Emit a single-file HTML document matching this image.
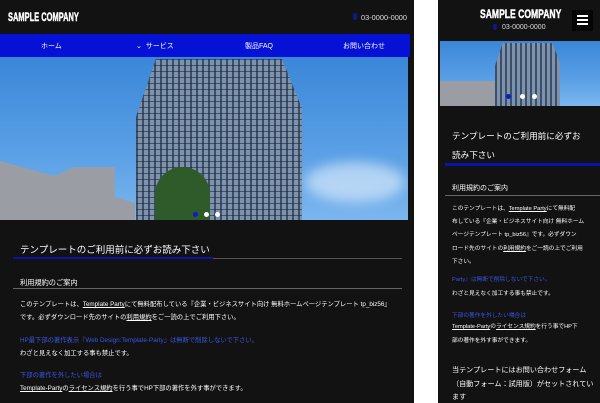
<!DOCTYPE html>
<html><head><meta charset="utf-8"><style>
*{margin:0;padding:0;box-sizing:border-box}
body{width:600px;height:403px;background:#fff;position:relative;overflow:hidden;font-family:"Liberation Sans","Noto Sans CJK JP",sans-serif;color:#fff}
.p{position:absolute;background:#121212;overflow:hidden}
.a{position:absolute;white-space:nowrap}
.u{text-decoration:underline}
.bl{color:#3b55e6}
.sky{background:linear-gradient(180deg,#3a86d8 0%,#5aa0e6 60%,#7bb6ee 100%)}
.logo{font-weight:bold;transform-origin:left top;-webkit-text-stroke:0.4px #fff}
</style></head><body>
<div class="p" style="left:0;top:0;width:414px;height:403px">
 <div class="a logo" style="left:8px;top:11px;font-size:11px;transform:scale(0.68,1.1)">SAMPLE COMPANY</div>
 <div class="a" style="left:353px;top:13px;width:4px;height:7px;background:#0b1a8a;border-radius:2px"></div>
 <div class="a" style="left:361px;top:13px;font-size:7.4px;color:#ddd">03-0000-0000</div>
 <div class="a" style="left:0;top:34px;width:410px;height:23px;background:#0511d4"></div>
 <div class="a" style="left:41px;top:41px;font-size:7px">ホーム</div>
 <div class="a" style="left:136px;top:41px;font-size:7px">⌄&nbsp; サービス</div>
 <div class="a" style="left:245px;top:41px;font-size:7px">製品FAQ</div>
 <div class="a" style="left:343px;top:41px;font-size:7px">お問い合わせ</div>
 <div class="a sky" style="left:0;top:57px;width:408px;height:163px;overflow:hidden">
  <div class="a" style="left:136px;top:2px;width:166px;height:165px;background:repeating-linear-gradient(90deg,#3d4f66 0 2px,#7d93ad 2px 6px),#5a6e88;clip-path:polygon(12% 0,88% 0,100% 30%,100% 100%,0 100%,0 35%)"></div>
  <div class="a" style="left:136px;top:2px;width:166px;height:165px;background:repeating-linear-gradient(180deg,rgba(30,40,55,.6) 0 1px,transparent 1px 6px);clip-path:polygon(12% 0,88% 0,100% 30%,100% 100%,0 100%,0 35%)"></div>
  <div class="a" style="left:0;top:104px;width:135px;height:60px;background:#9a9ea4;clip-path:polygon(0 0,40% 25%,55% 10%,85% 10%,85% 60%,100% 70%,100% 100%,0 100%)"></div>
  <div class="a" style="left:155px;top:110px;width:55px;height:55px;background:#2f5a2a;border-radius:50% 50% 0 0"></div>
  <div class="a" style="left:305px;top:105px;width:100px;height:40px;background:rgba(255,255,255,.5);border-radius:50%;filter:blur(6px)"></div>
  <div class="a" style="left:193px;top:155px;width:5px;height:5px;border-radius:50%;background:#0b1ad0"></div>
  <div class="a" style="left:204px;top:155px;width:5px;height:5px;border-radius:50%;background:#fff"></div>
  <div class="a" style="left:215px;top:155px;width:5px;height:5px;border-radius:50%;background:#fff"></div>
 </div>
 <div class="a" style="left:20px;top:242px;font-size:9.5px">テンプレートのご利用前に必ずお読み下さい</div>
 <div class="a" style="left:13px;top:258px;width:389px;height:1px;background:#555"></div>
 <div class="a" style="left:13px;top:257px;width:200px;height:2px;background:#0b14a8"></div>
 <div class="a" style="left:20px;top:278px;font-size:7.2px">利用規約のご案内</div>
 <div class="a" style="left:13px;top:288px;width:389px;height:1px;background:#666"></div>
 <div class="a" style="left:20px;top:299px;font-size:6.3px">このテンプレートは、<span class="u">Template Party</span>にて無料配布している『企業・ビジネスサイト向け 無料ホームページテンプレート tp_biz56』</div>
 <div class="a" style="left:20px;top:312px;font-size:6.3px">です。必ずダウンロード先のサイトの<span class="u">利用規約</span>をご一読の上でご利用下さい。</div>
 <div class="a bl" style="left:20px;top:335px;font-size:6.3px">HP最下部の著作表示『Web Design:Template-Party』は無断で削除しないで下さい。</div>
 <div class="a" style="left:20px;top:348px;font-size:6.3px">わざと見えなく加工する事も禁止です。</div>
 <div class="a bl" style="left:20px;top:370px;font-size:6.3px">下部の著作を外したい場合は</div>
 <div class="a" style="left:20px;top:383px;font-size:6.3px"><span class="u">Template-Party</span>の<span class="u">ライセンス規約</span>を行う事でHP下部の著作を外す事ができます。</div>
</div>
<div class="p" style="left:438px;top:0;width:162px;height:403px">
 <div class="a logo" style="left:42px;top:8px;font-size:11px;transform:scale(0.78,1.1)">SAMPLE COMPANY</div>
 <div class="a" style="left:55px;top:24px;width:4px;height:6px;background:#0b1a8a;border-radius:2px"></div>
 <div class="a" style="left:64px;top:24px;font-size:7px;color:#ddd">03-0000-0000</div>
 <div class="a" style="left:134px;top:10px;width:21px;height:21px;background:#050505"></div>
 <div class="a" style="left:139px;top:15px;width:11px;height:1.5px;background:#fff;box-shadow:0 4px 0 #fff,0 8px 0 #fff"></div>
 <div class="a sky" style="left:2px;top:41px;width:160px;height:65px;overflow:hidden">
  <div class="a" style="left:55px;top:2px;width:65px;height:65px;background:repeating-linear-gradient(90deg,#3d4f66 0 2px,#7d93ad 2px 5px),#5a6e88;clip-path:polygon(12% 0,88% 0,100% 30%,100% 100%,0 100%,0 35%)"></div>
  <div class="a" style="left:0;top:40px;width:55px;height:25px;background:#9a9ea4"></div>
  <div class="a" style="left:66px;top:53px;width:5px;height:5px;border-radius:50%;background:#0b1ad0"></div>
  <div class="a" style="left:80px;top:53px;width:5px;height:5px;border-radius:50%;background:#fff"></div>
  <div class="a" style="left:92px;top:53px;width:5px;height:5px;border-radius:50%;background:#fff"></div>
 </div>
 <div class="a" style="left:14px;top:127px;font-size:8.6px;line-height:19px">テンプレートのご利用前に必ずお<br>読み下さい</div>
 <div class="a" style="left:7px;top:163px;width:155px;height:3px;background:#0b14a8"></div>
 <div class="a" style="left:14px;top:183px;font-size:7px">利用規約のご案内</div>
 <div class="a" style="left:7px;top:195px;width:155px;height:1px;background:#666"></div>
 <div class="a" style="left:14px;top:203px;font-size:5.7px;line-height:13.2px">このテンプレートは、<span class="u">Template Party</span>にて無料配<br>布している『企業・ビジネスサイト向け 無料ホーム<br>ページテンプレート tp_biz56』です。必ずダウン<br>ロード先のサイトの<span class="u">利用規約</span>をご一読の上でご利用<br>下さい。</div>
 <div class="a bl" style="left:14px;top:274px;font-size:5.7px">Party』は無断で削除しないで下さい。</div>
 <div class="a" style="left:14px;top:288px;font-size:5.7px">わざと見えなく加工する事も禁止です。</div>
 <div class="a bl" style="left:14px;top:310px;font-size:5.7px">下部の著作を外したい場合は</div>
 <div class="a" style="left:14px;top:321px;font-size:5.7px;line-height:13.5px"><span class="u">Template-Party</span>の<span class="u">ライセンス規約</span>を行う事でHP下<br>部の著作を外す事ができます。</div>
 <div class="a" style="left:14px;top:364px;font-size:7.1px;line-height:13.5px">当テンプレートにはお問い合わせフォーム<br>（自動フォーム：試用版）がセットされてい<br>ます</div>
</div>
</body></html>
